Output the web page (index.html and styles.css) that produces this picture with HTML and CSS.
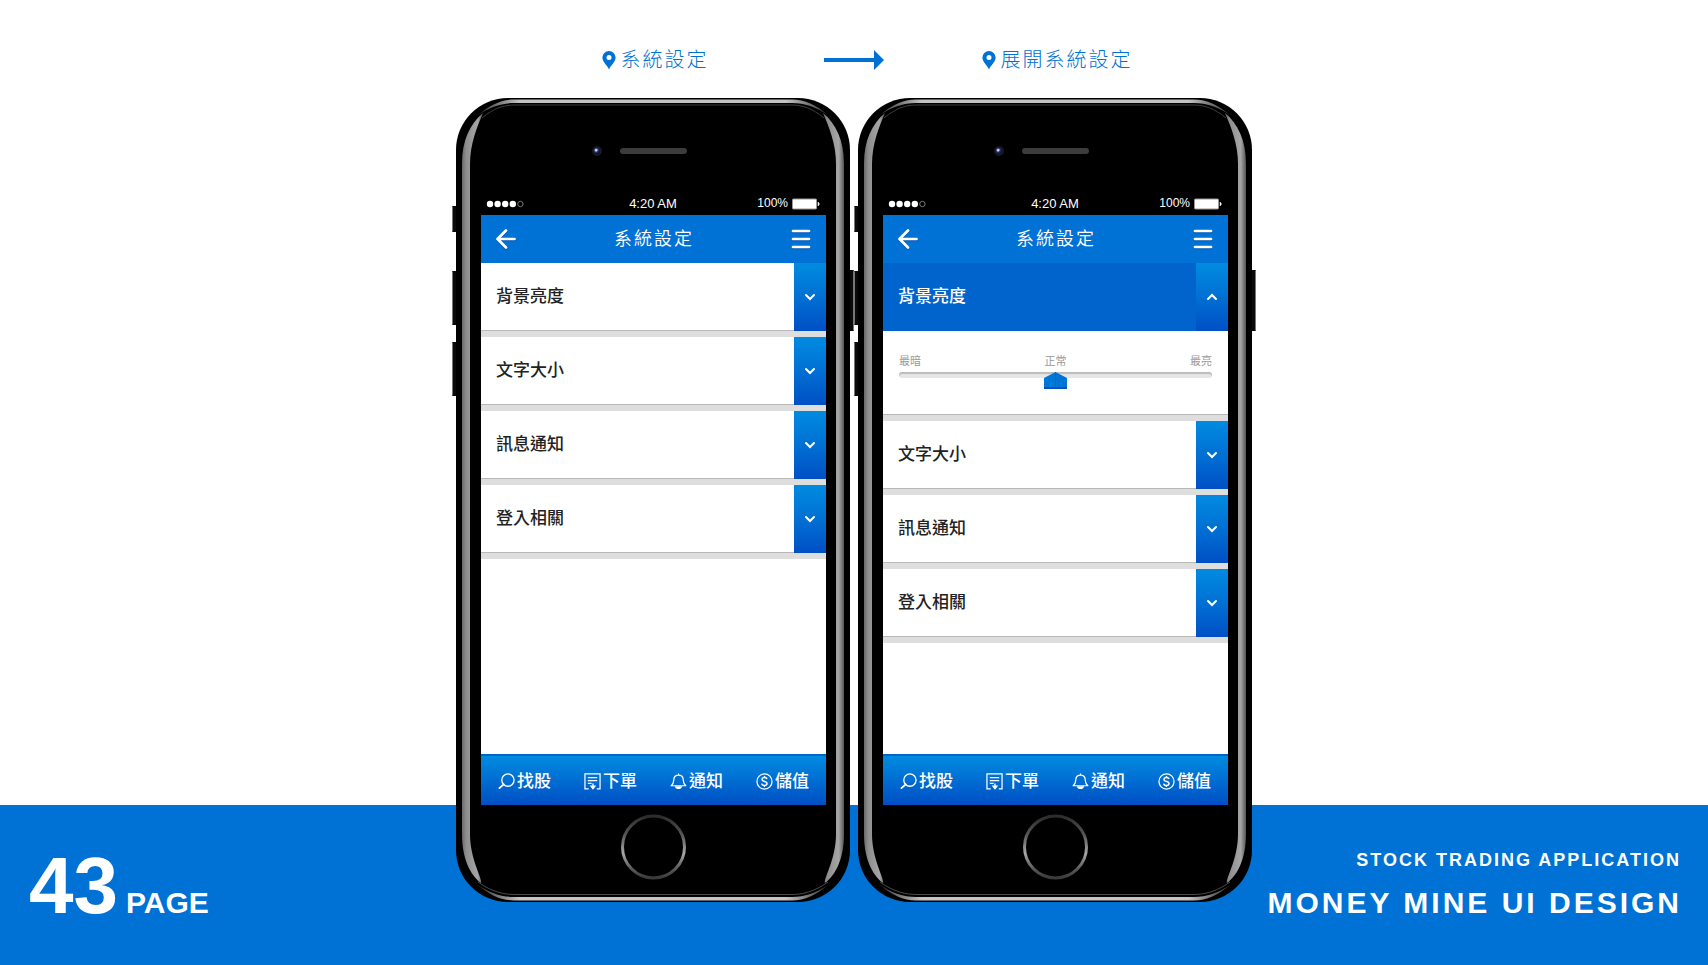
FILE: index.html
```html
<!DOCTYPE html>
<html lang="zh-Hant">
<head>
<meta charset="utf-8">
<title>Money Mine UI Design – 系統設定</title>
<link rel="stylesheet" href="styles.css">
</head>
<body>
<svg class="defs" aria-hidden="true">
  <defs>
    <linearGradient id="band" x1="0" x2="1" y1="0" y2="0">
      <stop offset="0" stop-color="#6a6a6a"/><stop offset=".2" stop-color="#8e8e8e"/><stop offset=".75" stop-color="#a6a6a6"/><stop offset="1" stop-color="#555"/>
    </linearGradient>
    <linearGradient id="rim" x1="0" x2="1" y1="0" y2="0">
      <stop offset="0" stop-color="#333"/><stop offset=".12" stop-color="#c4c4c4"/><stop offset=".88" stop-color="#c4c4c4"/><stop offset="1" stop-color="#333"/>
    </linearGradient>
    <linearGradient id="ring" x1="0" x2="0" y1="0" y2="1">
      <stop offset="0" stop-color="#2c2c2c"/><stop offset=".3" stop-color="#555"/><stop offset=".6" stop-color="#a8a8a8"/><stop offset=".85" stop-color="#5a5a5a"/><stop offset="1" stop-color="#3a3a3a"/>
    </linearGradient>
    <symbol id="frame" viewBox="0 0 402 804" preserveAspectRatio="none">
      <g fill="#0a0a0a">
        <rect x="0" y="108" width="8" height="26" rx="1"/><rect x="0" y="173" width="8" height="54" rx="1"/><rect x="0" y="244" width="8" height="54" rx="1"/>
        <rect x="394" y="172" width="8" height="61" rx="1"/>
      </g>
      <path d="M.5 109v24M.5 174v52M.5 245v52M401.5 173v59" stroke="#777" fill="none"/>
      <rect x="4" y="0" width="394" height="804" rx="52" fill="#000"/>
      <path d="M31 15C18 26 10 42 10 66V736C10 760 18 777 29 785C31 781 18 762 18 736V66C18 46 25 29 31 15Z" fill="url(#band)"/>
      <path d="M371 15C384 26 392 42 392 66V736C392 760 384 777 373 785C371 781 384 762 384 736V66C384 46 377 29 371 15Z" fill="url(#band)"/>
      <path d="M26 17C38 7 49 1.500 62 1.500H340C353 1.500 364 7 376 17C364 9 353 5 340 5H62C49 5 38 9 26 17Z" fill="url(#rim)"/>
      <path d="M30 20C42 10 52 7 63 7H339C350 7 360 10 372 20" fill="none" stroke="#3c3c3c"/>
      <path d="M26 787C38 797 49 802.500 62 802.500H340C353 802.500 364 797 376 787C364 795 353 799 340 799H62C49 799 38 795 26 787Z" fill="url(#rim)"/>
      <path d="M26 784C40 794 52 796.500 63 796.500H339C350 796.500 362 794 376 784" fill="none" stroke="#4a4a4a"/>
    </symbol>
    <symbol id="pin" viewBox="0 0 14 19"><path fill="currentColor" fill-rule="evenodd" d="M7 0a6.600 6.600 0 0 1 6.600 6.600C13.600 11.500 8.500 14.500 7 18.500C5.500 14.500.4 11.500.4 6.600A6.600 6.600 0 0 1 7 0Zm0 4a2.500 2.500 0 1 0 0 5 2.500 2.500 0 0 0 0-5Z"/></symbol>
    <symbol id="back" viewBox="0 0 20 20"><path d="M18.500 10H2M10 1.500 1.500 10 10 18.500" fill="none" stroke="#fff" stroke-width="2.700" stroke-linecap="round" stroke-linejoin="round"/></symbol>
    <symbol id="menu" viewBox="0 0 20 20"><path d="M2 2h16M2 10h16M2 18h16" fill="none" stroke="#fff" stroke-width="2.700" stroke-linecap="round"/></symbol>
    <symbol id="down" viewBox="0 0 12 8"><path d="m2 2 4 4 4-4" fill="none" stroke="#fff" stroke-width="2" stroke-linecap="round"/></symbol>
    <symbol id="up" viewBox="0 0 12 8"><path d="m2 6 4-4 4 4" fill="none" stroke="#fff" stroke-width="2" stroke-linecap="round"/></symbol>
    <symbol id="battery" viewBox="0 0 28 12"><rect x=".5" y="1" width="24" height="10" rx="1" fill="#fff" stroke="#999"/><path d="M26 4v4l1.500-2Z" fill="#fff" stroke="#fff" stroke-width=".5"/></symbol>
    <symbol id="signal" viewBox="0 0 38 8"><g fill="#fff"><circle cx="4" cy="4" r="3.200"/><circle cx="11.600" cy="4" r="3.200"/><circle cx="19.200" cy="4" r="3.200"/><circle cx="26.800" cy="4" r="3.200"/></g><circle cx="34.400" cy="4" r="2.700" fill="none" stroke="#777"/></symbol>
    <symbol id="search" viewBox="0 0 18 18"><g fill="none" stroke="#fff"><circle cx="10.500" cy="7.500" r="6.500" stroke-width="1.400"/><path d="M6 12 1.500 16" stroke-width="2" stroke-linecap="round"/></g></symbol>
    <symbol id="order" viewBox="0 0 18 18"><path d="M5 16.800H1V1h16v15.800h-3.500M4 5h10M4 8h10M4 11h4" fill="none" stroke="#fff" stroke-width="1.300"/><path d="M9.500 11v5M7.500 14h4L9.500 16.500Z" fill="#fff" stroke="#fff" stroke-width="1.400"/></symbol>
    <symbol id="bell" viewBox="0 0 18 18"><path d="M9 .6v1.400M1.200 13.500C4 11.500 3.800 9.500 4 7C4.200 4 6 2.200 9 2.200S13.800 4 14 7C14.200 9.500 14 11.500 16.800 13.500Z" fill="none" stroke="#fff" stroke-width="1.300" stroke-linejoin="round"/><path d="M5 14h8C12 18 6 18 5 14Z" fill="#fff"/></symbol>
    <symbol id="coin" viewBox="0 0 18 18"><g fill="none" stroke="#fff"><circle cx="9" cy="9" r="8" stroke-width="1.300"/><path d="M11.700 6.400C11.200 5 10.200 4.700 9 4.700c-3.300 0-3.600 3.300-.5 4.100 4.600 1 3.700 4.500.5 4.500-1.600 0-2.700-.7-3-2.100M9 3.200v1.500M9 13.300v1.500" stroke-width="1.500"/></g></symbol>
  </defs>
</svg>

<div class="board">
  <main class="stage">
    <div class="captions">
      <h2 class="caption"><svg class="pin" aria-hidden="true"><use href="#pin"/></svg>系統設定</h2>
      <div class="flow"><svg class="arrow" viewBox="0 0 60 20" aria-hidden="true"><path d="M0 8h50V0l10 10-10 10v-8H0Z" fill="#0071d5"/></svg></div>
      <h2 class="caption"><svg class="pin" aria-hidden="true"><use href="#pin"/></svg>展開系統設定</h2>
    </div>

    <div class="phones">
      <section class="phone">
        <svg class="frame" aria-hidden="true"><use href="#frame"/></svg>
        <div class="earpiece"><span class="camera"></span><span class="speaker"></span></div>
        <div class="status">
          <svg class="signal" aria-hidden="true"><use href="#signal"/></svg>
          <span>4:20 AM</span>
          <span class="power">100%<svg class="battery" aria-hidden="true"><use href="#battery"/></svg></span>
        </div>
        <div class="screen">
          <header class="bar">
            <button class="tool" aria-label="返回"><svg><use href="#back"/></svg></button>
            <h1 class="title">系統設定</h1>
            <button class="tool" aria-label="選單"><svg><use href="#menu"/></svg></button>
          </header>
          <div class="list">
            <div class="item"><button class="row">背景亮度<span class="toggle"><svg class="chevron"><use href="#down"/></svg></span></button></div>
            <div class="item"><button class="row">文字大小<span class="toggle"><svg class="chevron"><use href="#down"/></svg></span></button></div>
            <div class="item"><button class="row">訊息通知<span class="toggle"><svg class="chevron"><use href="#down"/></svg></span></button></div>
            <div class="item"><button class="row">登入相關<span class="toggle"><svg class="chevron"><use href="#down"/></svg></span></button></div>
          </div>
          <nav class="tabs">
            <a class="tab" href="#"><svg><use href="#search"/></svg>找股</a>
            <a class="tab" href="#"><svg><use href="#order"/></svg>下單</a>
            <a class="tab" href="#"><svg><use href="#bell"/></svg>通知</a>
            <a class="tab" href="#"><svg><use href="#coin"/></svg>儲值</a>
          </nav>
        </div>
        <div class="chin"><button class="home" aria-label="Home"><svg viewBox="0 0 66 66"><circle cx="33" cy="33" r="31" fill="#000" stroke="url(#ring)" stroke-width="3"/></svg></button></div>
      </section>

      <section class="phone">
        <svg class="frame" aria-hidden="true"><use href="#frame"/></svg>
        <div class="earpiece"><span class="camera"></span><span class="speaker"></span></div>
        <div class="status">
          <svg class="signal" aria-hidden="true"><use href="#signal"/></svg>
          <span>4:20 AM</span>
          <span class="power">100%<svg class="battery" aria-hidden="true"><use href="#battery"/></svg></span>
        </div>
        <div class="screen">
          <header class="bar">
            <button class="tool" aria-label="返回"><svg><use href="#back"/></svg></button>
            <h1 class="title">系統設定</h1>
            <button class="tool" aria-label="選單"><svg><use href="#menu"/></svg></button>
          </header>
          <div class="list">
            <div class="item">
              <button class="row row-open" aria-expanded="true">背景亮度<span class="toggle"><svg class="chevron"><use href="#up"/></svg></span></button>
              <div class="panel">
                <div class="marks"><span>最暗</span><label for="brightness">正常</label><span>最亮</span></div>
                <input class="slider" id="brightness" type="range" min="0" max="100" value="50">
              </div>
            </div>
            <div class="item"><button class="row">文字大小<span class="toggle"><svg class="chevron"><use href="#down"/></svg></span></button></div>
            <div class="item"><button class="row">訊息通知<span class="toggle"><svg class="chevron"><use href="#down"/></svg></span></button></div>
            <div class="item"><button class="row">登入相關<span class="toggle"><svg class="chevron"><use href="#down"/></svg></span></button></div>
          </div>
          <nav class="tabs">
            <a class="tab" href="#"><svg><use href="#search"/></svg>找股</a>
            <a class="tab" href="#"><svg><use href="#order"/></svg>下單</a>
            <a class="tab" href="#"><svg><use href="#bell"/></svg>通知</a>
            <a class="tab" href="#"><svg><use href="#coin"/></svg>儲值</a>
          </nav>
        </div>
        <div class="chin"><button class="home" aria-label="Home"><svg viewBox="0 0 66 66"><circle cx="33" cy="33" r="31" fill="#000" stroke="url(#ring)" stroke-width="3"/></svg></button></div>
      </section>
    </div>
  </main>

  <footer class="footer">
    <p class="page"><span class="number">43</span>PAGE</p>
    <div class="credit">
      <p class="kind">STOCK TRADING APPLICATION</p>
      <p class="brand">MONEY MINE UI DESIGN</p>
    </div>
  </footer>
</div>
</body>
</html>
```
FILE: styles.css
```css
* { box-sizing: border-box; }

body {
  margin: 0;
  background: #fff;
  font-family: "Liberation Sans", "Noto Sans CJK TC", sans-serif;
}

h1, h2, p { margin: 0; font-weight: inherit; }

button {
  padding: 0;
  border: 0;
  background: none;
  font: inherit;
  color: inherit;
  cursor: pointer;
}

svg { display: block; }

.defs { position: absolute; width: 0; height: 0; }

.board {
  display: grid;
  grid-template-rows: 1fr 160px;
  grid-template-columns: minmax(0, 1fr);
  min-height: 100vh;
}

/* Stage: captions and the two phones, overlapping the footer band */
.stage {
  grid-area: 1 / 1 / 3 / 2;
  z-index: 1;
  justify-self: center;
  width: 100%;
  max-width: 796px;
  padding: 48px 0 63px;
}

.captions, .phones {
  display: grid;
  grid-template-columns: minmax(0, 1fr) 8px minmax(0, 1fr);
}

.captions { margin-bottom: 26px; }

.caption {
  display: flex;
  justify-content: center;
  align-items: center;
  gap: 5px;
  padding-left: 4px;
  font-size: 20px;
  font-weight: 300;
  line-height: 24px;
  letter-spacing: 2px;
  color: #0071d5;
}

.pin { width: 14px; height: 19px; }

.flow { display: flex; justify-content: center; align-items: center; }
.arrow { flex: none; width: 60px; height: 20px; }

/* Phone */
.phone {
  position: relative;
  display: flex;
  flex-direction: column;
  padding: 0 24px 0 25px;
}

.phone:last-child { grid-column: 3; }

.frame {
  position: absolute;
  z-index: -1;
  top: 0;
  left: -4px;
  width: calc(100% + 8px);
  height: 100%;
}

.earpiece {
  display: grid;
  grid-template-columns: 1fr 67px 1fr;
  align-items: center;
  height: 96px;
  padding-top: 10px;
}

.camera {
  justify-self: end;
  width: 10px;
  height: 10px;
  margin-right: 18px;
  border: 2px solid #1b1820;
  border-radius: 50%;
  background: radial-gradient(circle at 35% 35%, #b8c8f0 0 1px, #22356e 2px, #0a1030 4px);
}

.speaker { height: 6px; border-radius: 3px; background: #3c3c3c; }

.status {
  display: grid;
  grid-template-columns: 1fr auto 1fr;
  align-items: center;
  height: 21px;
  padding: 0 6px 2px 5px;
  font-size: 13px;
  line-height: 19px;
  color: #fff;
}

.signal { width: 38px; height: 8px; }
.power { display: flex; justify-content: flex-end; align-items: center; gap: 4px; font-size: 12px; }
.battery { width: 28px; height: 12px; }

.screen {
  display: flex;
  flex-direction: column;
  min-height: 590px;
  background: #fff;
}

.bar {
  display: flex;
  justify-content: space-between;
  align-items: center;
  height: 48px;
  padding: 0 15px;
  background: #0071d5;
  color: #fff;
}

.title {
  padding-left: 1px;
  font-size: 18px;
  font-weight: 350;
  line-height: 24px;
  letter-spacing: 2px;
}

.tool svg {
  width: 20px;
  height: 20px;
  filter: drop-shadow(0 1px 0 #0058b8);
}

.list { flex: 1; }

.item {
  border-bottom: 6px solid #dedede;
  box-shadow: inset 0 -1px 0 #b8b8b8;
}

.row {
  display: flex;
  justify-content: space-between;
  align-items: center;
  width: 100%;
  height: 68px;
  padding-left: 15px;
  font-size: 17px;
  font-weight: 500;
  line-height: 24px;
  color: #222;
}

.row-open { background: #0064cc; color: #fff; }

.toggle {
  display: flex;
  justify-content: center;
  align-items: center;
  width: 32px;
  height: 100%;
  background: linear-gradient(#008be0, #0070d4 50%, #004fc4);
}

.chevron { width: 12px; height: 8px; }

.panel { height: 84px; padding: 22px 16px 0; }

.marks {
  display: flex;
  justify-content: space-between;
  margin-bottom: 3px;
  font-size: 11px;
  line-height: 16px;
  color: #999;
}

.slider {
  display: block;
  appearance: none;
  width: 100%;
  height: 6px;
  margin: 0;
  border-radius: 3px;
  background: #e6e6e6;
  box-shadow: inset 0 2px 1px #bcbcbc;
}

.slider::-webkit-slider-runnable-track { height: 6px; }

.slider::-webkit-slider-thumb {
  appearance: none;
  width: 23px;
  height: 17px;
  background:
    linear-gradient(#0052c0, #0052c0) bottom / 100% 2px no-repeat,
    linear-gradient(90deg, #0078d8 11px, #0064c4 11px 12px, #0074d6 12px);
  clip-path: polygon(50% 0, 100% 35%, 100% 100%, 0 100%, 0 35%);
}

.tabs {
  display: flex;
  justify-content: space-between;
  align-items: center;
  height: 51px;
  padding: 2px 17px 0;
  border-top: 2px solid #0064c8;
  background: linear-gradient(#008be0, #004fc4);
}

.tab {
  display: flex;
  align-items: center;
  gap: 2px;
  font-size: 17px;
  font-weight: 500;
  line-height: 24px;
  color: #fff;
  text-decoration: none;
}

.tab svg { width: 17px; height: 17px; }

.chin {
  display: flex;
  justify-content: center;
  height: 97px;
  padding-top: 9px;
}

.home, .home svg { width: 67px; height: 66px; }

/* Footer band */
.footer {
  grid-area: 2 / 1 / 3 / 2;
  display: flex;
  justify-content: space-between;
  align-items: flex-end;
  padding: 0 26px 45px 29px;
  background: #0071d5;
  font-weight: 700;
  color: #fff;
}

.page {
  display: flex;
  align-items: baseline;
  gap: 8px;
  font-size: 30px;
  line-height: 34px;
}

.number { font-size: 80px; }

.credit { text-align: right; }

.kind {
  margin-bottom: 16px;
  padding-right: 1px;
  font-size: 18px;
  line-height: 20px;
  letter-spacing: 2px;
}

.brand {
  font-size: 30px;
  line-height: 34px;
  letter-spacing: 3px;
}
```
